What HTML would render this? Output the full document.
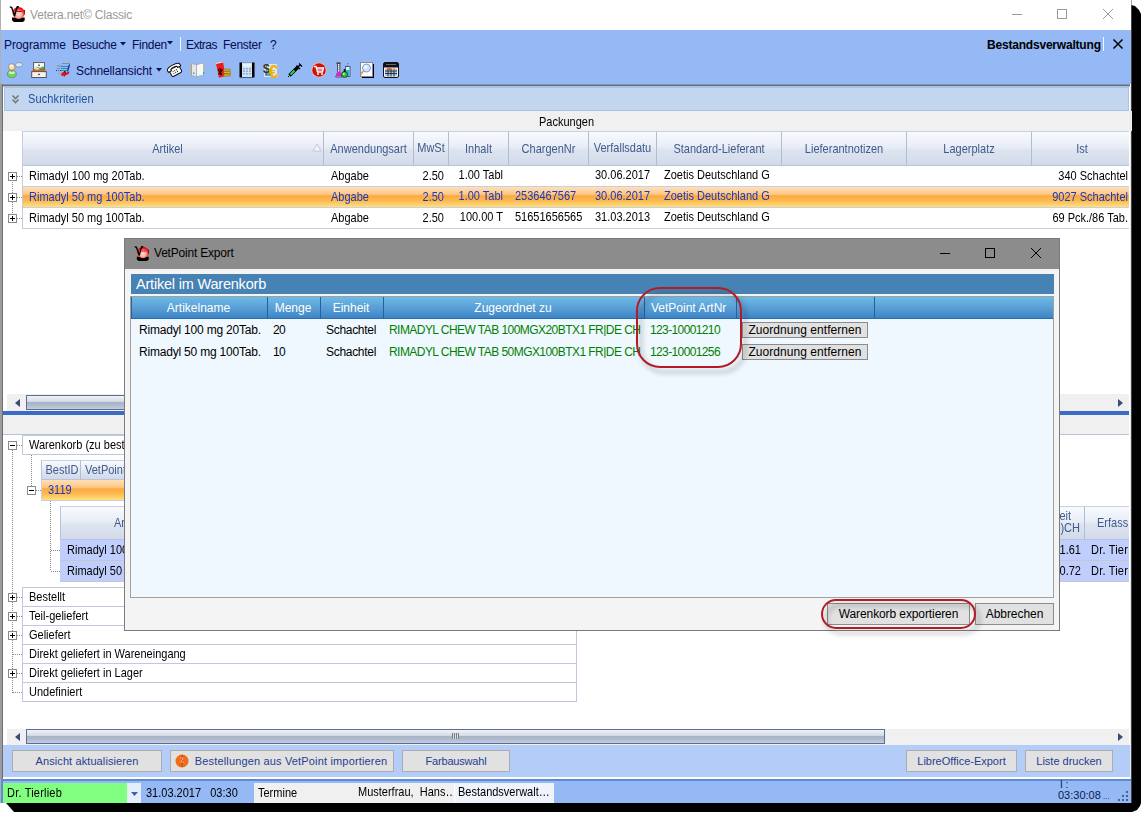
<!DOCTYPE html>
<html>
<head>
<meta charset="utf-8">
<title>Vetera.net Classic</title>
<style>
*{box-sizing:border-box;margin:0;padding:0}
html,body{width:1147px;height:818px;overflow:hidden;background:#fff}
body{font-family:"Liberation Sans",sans-serif;font-size:11px;color:#000;position:relative}
.a{position:absolute}
.t{position:absolute;white-space:nowrap;line-height:1}
/* main window */
#shadow{left:6px;top:5px;width:1135px;height:807px;background:#000;border-radius:0 10px 10px 0}
#win{left:0;top:0;width:1131px;height:803px;background:#fff;border-left:1px solid #b0b0b0}
#menubar{left:1px;top:30px;width:1130px;height:54px;background:#94b9f5}
.menu{font-size:12px;color:#0a0a50;letter-spacing:-.3px}
.hdr{position:absolute;top:131px;height:35px;background:linear-gradient(#f8fafd 0,#e8edf6 45%,#dde4f0 56%,#d2daea 100%);border-right:1px solid #b2bcd2;border-top:1px solid #c9d2e4;border-bottom:1px solid #b9c4da;color:#3f5a8c;text-align:center;line-height:35px;font-size:11px;white-space:nowrap;overflow:hidden}
.row{position:absolute;left:22px;width:1107px;height:21px;border-bottom:1px solid #c9cfe0;background:#fff}
.sel{background:linear-gradient(#fee0b6 0,#fdc88a 36%,#fbaa3e 44%,#fcb950 68%,#fee07e 100%);color:#1838c8}
.btn{position:absolute;background:#e1e1e1;border:1px solid #adadad;text-align:center;white-space:nowrap;overflow:hidden}
.dv{width:1px;background:repeating-linear-gradient(#888 0 1px,transparent 1px 2px)}
.dh{height:1px;background:repeating-linear-gradient(90deg,#888 0 1px,transparent 1px 2px)}
.cell{background:#fff;border:1px solid #c0c8dc}
.prow{height:21px;background:#bfcefc;border-bottom:1px solid #c8c4d0}
.thumb{border:1px solid #5b6c98;background:linear-gradient(#f0f2f6 0,#d6dce6 42%,#a6b2c6 48%,#b2bdce 75%,#c4cedc 100%)}
.bb{font-size:11px;color:#243f90;line-height:20px}
.d{font-size:12px;color:#000;letter-spacing:-.2px}
.g{color:#008000;letter-spacing:-.55px}
.dh2{padding-right:3px;height:22px;border-left:1px solid #2a5f9e;color:#fff;font-size:12px;text-align:center;line-height:23px;white-space:nowrap}
.ann{border:2px solid #b31b25;filter:drop-shadow(4px 5px 2.500px rgba(0,0,0,.33))}
.row .t,.cell .t,.prow .t,.sel .t,.hdr .t,.sb .t,.t.sb,.t.ms{transform:scaleY(1.12);transform-origin:0 10px}
.hs{display:inline-block;transform:scaleY(1.12);transform-origin:50% 60%}
</style>
</head>
<body>
<svg class="a" style="left:0;top:0" width="1147" height="818"><path d="M1131 5l4 1 4 4 2 4V803l-1 3-3 4-5 2H14L6 803z" fill="#000"/><path d="M1131.500 0v5" stroke="#aaa"/><path d="M1131.500 5v798" stroke="#444"/></svg>
<div class="a" id="win"></div>
<!-- title bar -->
<div class="t" style="left:30px;top:9px;font-size:12px;color:#9a9a9a;letter-spacing:-.18px">Vetera.net© Classic</div>
<svg class="a" style="left:1011px;top:8px" width="110" height="14" viewBox="0 0 110 14"><g stroke="#9a9a9a" stroke-width="1" fill="none"><path d="M1 6.5h10"/><rect x="46.500" y="1.500" width="9" height="9"/><path d="M92 1l10 10M102 1l-10 10"/></g></svg>
<!-- menu/toolbar -->
<div class="a" id="menubar"></div>
<div class="t menu" style="left:4px;top:39px;letter-spacing:-.1px">Programme</div>
<div class="t menu" style="left:72px;top:39px">Besuche</div>
<div class="t menu" style="left:132px;top:39px">Finden</div>
<div class="t menu" style="left:186px;top:39px;letter-spacing:-.5px">Extras</div>
<div class="t menu" style="left:223px;top:39px">Fenster</div>
<div class="t menu" style="left:270px;top:39px">?</div>
<div class="a" style="left:180px;top:37px;width:1px;height:14px;background:#f2f6fe"></div>
<div class="t menu" style="left:987px;top:39px;font-weight:bold;color:#000;letter-spacing:-.2px">Bestandsverwaltung</div>
<div class="a" style="left:1103px;top:37px;width:1px;height:14px;background:#f2f6fe"></div>
<svg class="a" style="left:1112px;top:38px" width="12" height="12" viewBox="0 0 12 12"><path d="M1.500 1.500l9 9M10.500 1.500l-9 9" stroke="#000" stroke-width="1.500"/></svg>
<div class="t menu" style="left:76px;top:65px;letter-spacing:-.1px">Schnellansicht</div>
<!-- toolbar icons -->
<svg class="a" style="left:7px;top:62px" width="16" height="16" viewBox="0 0 16 16"><ellipse cx="12" cy="2.8" rx="3.6" ry="2.3" fill="#cfe6fb" stroke="#7d8aa0" stroke-width=".8"/><ellipse cx="4.8" cy="12" rx="4.6" ry="3.8" fill="#6fd35a" stroke="#5a8a55" stroke-width=".7"/><ellipse cx="4.8" cy="10.6" rx="3" ry="1.6" fill="#d4f3c8"/><path d="M3.8 8.6l1 2 1-2z" fill="#e0402a"/><circle cx="4.8" cy="5" r="3.3" fill="#f6deb0" stroke="#8a7a66" stroke-width=".7"/><circle cx="4.2" cy="4" r="1.6" fill="#fdf3dc"/></svg>
<svg class="a" style="left:31px;top:62px" width="16" height="16" viewBox="0 0 16 16"><rect x="2.5" y=".5" width="11" height="7" fill="#e9e9e9" stroke="#666"/><rect x="3.5" y="1.5" width="9" height="3" fill="#fafafa"/><rect x="7" y="2.6" width="2" height="1.2" fill="#555"/><path d="M4 6.5l3-1.5 2 1 3-1.5 1 .8v2H4z" fill="#3cb828"/><path d="M4 6.8l2.500-1 2 1.200V8H4z" fill="#f4f4f4"/><rect x="1.500" y="7.500" width="13" height="2.200" fill="#f05a10"/><rect x=".7" y="9.600" width="14.600" height="5.900" fill="#f2f2f2" stroke="#555"/><rect x="7" y="11.800" width="2" height="1.300" fill="#555"/></svg>
<svg class="a" style="left:55px;top:62px" width="16" height="16" viewBox="0 0 16 16"><path d="M7 1.500h8" stroke="#8a8a8a"/><path d="M2 4h5M2 6.500h3" stroke="#8a8a8a" fill="none"/><path d="M6 4.500h8M6 6.500h7M5 8.500h7" stroke="#2a8fa8"/><path d="M14.500 2.500l-2 7" stroke="#1a2fb0" stroke-width="1.300"/><path d="M1 8.500h6" stroke="#1a2fb0" stroke-dasharray="1 1"/><path d="M4 8v4h3" stroke="#9aa" fill="none"/><path d="M6.500 11l3-1.500 1.500 1.200 3.500-1.200-.800 2.500-3 1.200-1.500 1.800-1-1.500-2 .5z" fill="#e0101a"/><path d="M9 9.500l2 .7" stroke="#111" stroke-width="1.200"/></svg>
<svg class="a" style="left:156px;top:68px" width="6" height="4"><path d="M0 0h6L3 3.500z" fill="#10104a"/></svg>
<svg class="a" style="left:120px;top:42px" width="6" height="4"><path d="M0 0h6L3 3.500z" fill="#10104a"/></svg>
<svg class="a" style="left:167px;top:41px" width="6" height="4"><path d="M0 0h6L3 3.500z" fill="#10104a"/></svg>
<svg class="a" style="left:167px;top:62px" width="16" height="16" viewBox="0 0 16 16"><g transform="rotate(-28 8 8)"><rect x="2.500" y="5.500" width="11" height="7.500" rx="1.500" fill="#fff" stroke="#111"/><path d="M1 5.500c0-4 14-4 14 0v1.500h-3.500V5.500c-1.500-1-5.500-1-7 0V7H1z" fill="#fff" stroke="#111"/><path d="M5.500 8v4M7.500 8v4M9.500 8v4" stroke="#111" stroke-width=".9" stroke-dasharray="1 1"/></g></svg>
<svg class="a" style="left:190px;top:62px" width="16" height="16" viewBox="0 0 16 16"><path d="M1.500 1.500l5 1.200v12l-5-1.200z" fill="#e4e6e8" stroke="#9a9a90" stroke-width=".6"/><path d="M6.500 2.700l7-1.700v12l-7 1.700z" fill="#f7f7f7" stroke="#9a9a90" stroke-width=".6"/><path d="M1.500 1.500v12" stroke="#c8a050" stroke-width="1"/><path d="M13.800 1v12" stroke="#b0b8c0" stroke-width="1"/><rect x="13" y="5" width="1.500" height="2" fill="#e8b830"/><rect x="13" y="10" width="1.500" height="2" fill="#38a8b8"/><rect x="3" y="10.500" width="1.500" height="1.500" fill="#38a8b8"/></svg>
<svg class="a" style="left:215px;top:62px" width="16" height="16" viewBox="0 0 16 16"><path d="M1 1.500l7-1.500 2.500 14-6.500 1.800z" fill="#f01818"/><path d="M1 1.500l7-1.500" stroke="#fff" stroke-width=".8"/><circle cx="4.800" cy="8" r="1.300" fill="none" stroke="#000" stroke-width="1"/><path d="M3.500 12.500l4-5" stroke="#000" stroke-width="1.100"/><circle cx="6" cy="12" r="1" fill="#000"/><g fill="#e8b820" stroke="#7a5a10" stroke-width=".6"><rect x="8.500" y="7.200" width="7" height="2" rx="1"/><rect x="8.500" y="9.600" width="7" height="2" rx="1"/><rect x="8.500" y="12" width="7" height="2" rx="1"/></g></svg>
<svg class="a" style="left:239px;top:62px" width="16" height="16" viewBox="0 0 16 16"><rect x=".5" y=".5" width="15" height="15" fill="#000"/><rect x="3" y=".5" width="10" height="14.500" fill="#cfe2f8"/><rect x="4" y="2" width="8" height="2.500" fill="#e8f2fc"/><g fill="#8ab0e0"><rect x="4" y="6" width="2" height="1.500"/><rect x="7" y="6" width="2" height="1.500"/><rect x="4" y="8.500" width="2" height="1.500"/><rect x="7" y="8.500" width="2" height="1.500"/><rect x="4" y="11" width="2" height="1.500"/><rect x="7" y="11" width="2" height="1.500"/><rect x="10" y="8.500" width="2" height="1.500"/><rect x="10" y="11" width="2" height="1.500"/></g><rect x="10" y="5.800" width="2" height="1.800" fill="#f09040"/></svg>
<svg class="a" style="left:263px;top:62px" width="16" height="16" viewBox="0 0 16 16"><rect x="1" y="2" width="13" height="13" fill="#dfe7ee"/><rect x="2" y="10" width="8" height="4" fill="#58a0d8"/><text x="0" y="11" font-family="Liberation Sans" font-weight="bold" font-size="12" fill="#333">$</text><text x="5.500" y="15.500" font-family="Liberation Sans" font-weight="bold" font-size="18" fill="#f0b400">€</text></svg>
<svg class="a" style="left:287px;top:62px" width="16" height="16" viewBox="0 0 16 16"><path d="M2.500 13.500L11 5" stroke="#000" stroke-width="3.400" stroke-linecap="butt"/><path d="M3.500 12.500L7.500 8.500" stroke="#20e050" stroke-width="2"/><path d="M9.500 3.500l3.500 3.500M11 5l2.500-2.500M12 1.500l3 3" stroke="#000" stroke-width="1.300" fill="none"/><path d="M1 15l1.500-1.500" stroke="#000" stroke-width="1"/></svg>
<svg class="a" style="left:311px;top:62px" width="16" height="16" viewBox="0 0 16 16"><circle cx="8" cy="8" r="7.600" fill="#f0c8a0"/><circle cx="8" cy="8" r="6.800" fill="#d01010"/><path d="M3 4.500h2l1.500 5.500h5l1-4H6" stroke="#fff" stroke-width="1.300" fill="none"/><path d="M6.500 8h5.500" stroke="#fff" stroke-width="1"/><circle cx="7" cy="12" r="1" fill="#fff"/><circle cx="11" cy="12" r="1" fill="#fff"/></svg>
<svg class="a" style="left:335px;top:62px" width="16" height="16" viewBox="0 0 16 16"><rect x="1.500" y=".5" width="4" height="1.300" fill="#222"/><path d="M2.500 1.500v9l-1.800 4.500h6l-1.800-4.500v-9z" fill="#f4f4f8" stroke="#333" stroke-width=".8"/><path d="M2.600 9.500h2.800l1.300 5H1.300z" fill="#e020d8"/><path d="M3.500 3.500h1M3.500 5.500h1M3.500 7.500h1" stroke="#333" stroke-width=".7"/><rect x="10.500" y="4.500" width="4.500" height="10" fill="#d8f0f8" stroke="#445" stroke-width=".8"/><rect x="11" y="8" width="3.500" height="6" fill="#28b8d8"/><path d="M13.500 1l-2 4" stroke="#3050c0" stroke-width=".9" stroke-dasharray="1 1"/><circle cx="9.500" cy="12.500" r="3" fill="#30c830" stroke="#0a3a0a" stroke-width=".8"/><rect x="8.700" y="7" width="1.600" height="3" fill="#111"/><circle cx="8.800" cy="12" r=".9" fill="#c8f8c8"/></svg>
<svg class="a" style="left:359px;top:62px" width="16" height="16" viewBox="0 0 16 16"><rect x="3" y="2" width="12" height="14" fill="#000"/><rect x="1.500" y=".5" width="12" height="14" fill="#fbfbfd" stroke="#889"/><circle cx="7.500" cy="6" r="4" fill="#cfe4fa" stroke="#7aa0d0" stroke-width="1"/><circle cx="6.500" cy="5" r="1.800" fill="#f0f8ff"/><path d="M4.500 9l-3 3.500" stroke="#c89858" stroke-width="1.600"/></svg>
<svg class="a" style="left:383px;top:62px" width="16" height="16" viewBox="0 0 16 16"><rect x=".5" y=".5" width="15" height="15" rx="1.500" fill="#fff" stroke="#111"/><rect x="1" y="1" width="14" height="4.500" fill="#111"/><rect x="3" y="2" width="10" height="1" fill="#666"/><rect x="2" y="6.500" width="12" height="8" fill="#a8c8e8"/><path d="M2 9h12M2 11.500h12M5 6.500v8M8 6.500v8M11 6.500v8" stroke="#223" stroke-width=".9"/><rect x="4" y="6.200" width="4" height="2" fill="#f05020"/><rect x="10" y="6.500" width="2" height="1.800" fill="#f0a020"/></svg>
<svg class="a" style="left:9px;top:6px" width="16" height="16" viewBox="0 0 16 16"><defs><radialGradient id="ag9" cx=".5" cy=".62" r=".55"><stop offset="0" stop-color="#ffdccc"/><stop offset=".5" stop-color="#ffa498"/><stop offset=".82" stop-color="#ff2424"/><stop offset="1" stop-color="#e80010"/></radialGradient></defs><path d="M3 11.500h12.700v3l-2.200 1.800H5.200L3 14.300z" fill="#000"/><rect x="14.300" y="4" width="1.500" height="4.500" fill="#000"/><circle cx="9.600" cy="7" r="6.100" fill="url(#ag9)"/><path d="M.8 .8l1.800 .5 3 8.500 2.600-9h1.600" stroke="#000" stroke-width="1.400" fill="none" stroke-linejoin="round"/><path d="M8 5.500h5" stroke="#b01020" stroke-width="1"/><path d="M8.300 6v2.500M10.300 6v2.500M12.300 6v2.500" stroke="#d8e0e8" stroke-width=".8"/></svg>
<!-- content frame -->
<div class="a" style="left:0;top:84px;width:1130px;height:3px;background:#6f6f6f;border-top:1px solid #7d93b8;border-bottom:1px solid #a9bfde"></div>
<div class="a" style="left:0;top:84px;width:3px;height:695px;background:#6e6e6e;border-left:2px solid #9c9c9c"></div>
<div class="a" id="such" style="left:4px;top:87px;width:1125px;height:24px;background:#c2d6f0;border:1px solid #a9c3e8"></div>
<svg class="a" style="left:11px;top:94px" width="9" height="11" viewBox="0 0 9 11"><path d="M1.500 1.500l3 3 3-3M1.500 5.500l3 3 3-3" stroke="#777" stroke-width="1.600" fill="none"/></svg>
<div class="t ms" style="left:28px;top:94px;font-size:11px;color:#1f4ea0;letter-spacing:.12px">Suchkriterien</div>
<div class="a" style="left:3px;top:111px;width:1129px;height:20px;background:#f0f0f0"></div>
<div class="t ms" style="left:539px;top:117px">Packungen</div>
<!-- upper grid -->
<div class="a" style="left:3px;top:131px;width:1127px;height:264px;background:#fff"></div>
<div class="a" style="left:22px;top:131px;width:1px;height:98px;background:#c3cbdd;z-index:2"></div>
<div class="hdr" style="left:23px;width:301px;padding-right:11px"><span class="hs">Artikel</span></div>
<svg class="a" style="left:312px;top:143px;z-index:3" width="10" height="9" viewBox="0 0 10 9"><path d="M5 1L9 8H1z" fill="#f4f6fa" stroke="#c2c8d6" stroke-width="1"/></svg>
<div class="hdr" style="left:324px;width:90px"><span class="hs">Anwendungsart</span></div>
<div class="hdr" style="left:414px;width:35px;line-height:32px"><span class="hs">MwSt</span></div>
<div class="hdr" style="left:449px;width:60px"><span class="hs">Inhalt</span></div>
<div class="hdr" style="left:509px;width:80px"><span class="hs">ChargenNr</span></div>
<div class="hdr" style="left:589px;width:68px;line-height:33px"><span class="hs">Verfallsdatu</span></div>
<div class="hdr" style="left:657px;width:125px"><span class="hs">Standard-Lieferant</span></div>
<div class="hdr" style="left:782px;width:125px"><span class="hs">Lieferantnotizen</span></div>
<div class="hdr" style="left:907px;width:125px"><span class="hs">Lagerplatz</span></div>
<div class="hdr" style="left:1032px;width:97px;border-right:0;padding-left:3px"><span class="hs">Ist</span></div>
<div class="row" style="top:166px"><span class="t" style="left:7px;top:5px">Rimadyl 100 mg 20Tab.</span><span class="t" style="left:309px;top:5px">Abgabe</span><span class="t" style="right:685px;top:5px">2.50</span><span class="t" style="right:626px;top:4px">1.00 Tabl</span><span class="t" style="left:493px;top:4px;width:72px;overflow:hidden"></span><span class="t" style="left:573px;top:4px">30.06.2017</span><span class="t" style="left:642px;top:4px">Zoetis Deutschland G</span><span class="t" style="right:1px;top:5px">340 Schachtel</span></div>
<div class="row sel" style="top:187px"><span class="t" style="left:7px;top:5px">Rimadyl 50 mg 100Tab.</span><span class="t" style="left:309px;top:5px">Abgabe</span><span class="t" style="right:685px;top:5px">2.50</span><span class="t" style="right:626px;top:4px">1.00 Tabl</span><span class="t" style="left:493px;top:4px;width:72px;overflow:hidden">2536467567</span><span class="t" style="left:573px;top:4px">30.06.2017</span><span class="t" style="left:642px;top:4px">Zoetis Deutschland G</span><span class="t" style="right:1px;top:5px">9027 Schachtel</span></div>
<div class="row" style="top:208px"><span class="t" style="left:7px;top:5px">Rimadyl 50 mg 100Tab.</span><span class="t" style="left:309px;top:5px">Abgabe</span><span class="t" style="right:685px;top:5px">2.50</span><span class="t" style="right:626px;top:4px">100.00 T</span><span class="t" style="left:493px;top:4px;width:72px;overflow:hidden">51651656565</span><span class="t" style="left:573px;top:4px">31.03.2013</span><span class="t" style="left:642px;top:4px">Zoetis Deutschland G</span><span class="t" style="right:1px;top:5px">69 Pck./86 Tab.</span></div>
<div class="a dv" style="left:12px;top:176px;height:42px"></div>
<div class="a dh" style="left:17px;top:176px;width:5px"></div>
<svg class="a" style="left:8px;top:172px" width="9" height="9" viewBox="0 0 9 9"><rect x=".5" y=".5" width="8" height="8" fill="#fff" stroke="#8a8a8a"/><path d="M2 4.5h5M4.5 2v5" stroke="#000" fill="none"/></svg>
<div class="a dh" style="left:17px;top:197px;width:5px"></div>
<svg class="a" style="left:8px;top:193px" width="9" height="9" viewBox="0 0 9 9"><rect x=".5" y=".5" width="8" height="8" fill="#fff" stroke="#8a8a8a"/><path d="M2 4.5h5M4.5 2v5" stroke="#000" fill="none"/></svg>
<div class="a dh" style="left:17px;top:218px;width:5px"></div>
<svg class="a" style="left:8px;top:214px" width="9" height="9" viewBox="0 0 9 9"><rect x=".5" y=".5" width="8" height="8" fill="#fff" stroke="#8a8a8a"/><path d="M2 4.5h5M4.5 2v5" stroke="#000" fill="none"/></svg>
<!-- upper scrollbar + splitter -->
<div class="a" style="left:3px;top:394px;width:1126px;height:17px;background:#f0f0f0"></div>
<div class="a" style="left:3px;top:394px;width:4px;height:17px;background:#fff"></div>
<div class="a thumb" style="left:26px;top:395px;width:500px;height:15px"></div>
<svg class="a" style="left:15px;top:399px" width="5" height="8"><path d="M5 0v8L0 4z" fill="#3c4a78"/></svg>
<svg class="a" style="left:1118px;top:399px" width="5" height="8"><path d="M0 0v8l5-4z" fill="#3c4a78"/></svg>
<div class="a" style="left:3px;top:411px;width:1126px;height:4px;background:#3a6bc5"></div>
<div class="a" style="left:3px;top:415px;width:1126px;height:20px;background:#f0f0f0;border-bottom:1px solid #b8c3da"></div>
<!-- lower grid -->
<div class="a" style="left:3px;top:435px;width:1127px;height:294px;background:#fff"></div>
<div class="a cell" style="left:22px;top:435px;width:555px;height:20px"><span class="t" style="left:6px;top:4px">Warenkorb (zu bestellen)</span></div>
<svg class="a" style="left:8px;top:441px" width="9" height="9" viewBox="0 0 9 9"><rect x=".5" y=".5" width="8" height="8" fill="#fff" stroke="#8a8a8a"/><path d="M2 4.5h5" stroke="#000" fill="none"/></svg>
<div class="a dh" style="left:17px;top:445px;width:5px"></div>
<div class="a dv" style="left:12px;top:450px;height:243px"></div>
<div class="hdr" style="left:41px;top:460px;width:40px;height:20px;line-height:18px;border-left:1px solid #b9c4da;padding-left:2px"><span class="hs">BestID</span></div>
<div class="hdr" style="left:81px;top:460px;width:60px;height:20px;line-height:18px;text-align:left;padding-left:4px"><span class="hs">VetPoint</span></div>
<div class="a sel" style="left:41px;top:480px;width:200px;height:21px;border-bottom:1px solid #c9cfe0;border-left:1px solid #c9cfe0"><span class="t" style="left:6px;top:5px">3119</span></div>
<div class="a dv" style="left:31px;top:455px;height:31px"></div>
<svg class="a" style="left:27px;top:486px" width="9" height="9" viewBox="0 0 9 9"><rect x=".5" y=".5" width="8" height="8" fill="#fff" stroke="#8a8a8a"/><path d="M2 4.5h5" stroke="#000" fill="none"/></svg>
<div class="a dh" style="left:36px;top:490px;width:5px"></div>
<div class="hdr" style="left:60px;top:506px;width:200px;height:34px;line-height:32px;border-left:1px solid #b9c4da;text-align:left;padding-left:53px"><span class="hs">Artikel</span></div>
<div class="a prow" style="left:60px;top:540px;width:200px"><span class="t" style="left:7px;top:5px">Rimadyl 100 mg 20Tab.</span></div>
<div class="a prow" style="left:60px;top:561px;width:200px"><span class="t" style="left:7px;top:5px">Rimadyl 50 mg 100Tab.</span></div>
<div class="a dv" style="left:50px;top:501px;height:70px"></div>
<div class="a dh" style="left:51px;top:550px;width:9px"></div>
<div class="a dh" style="left:51px;top:571px;width:9px"></div>
<div class="hdr" style="left:1040px;top:506px;width:45px;height:34px"><span class="t" style="right:13px;top:4px">eit</span><span class="t" style="right:4px;top:16px">%)CH</span></div>
<div class="hdr" style="left:1085px;top:506px;width:45px;height:34px;line-height:32px;text-align:left;padding-left:12px;border-right:0;width:44px"><span class="hs">Erfass</span></div>
<div class="a prow" style="left:1040px;top:540px;width:89px"><span class="t" style="right:48px;top:5px">1.61</span><span class="t" style="left:51px;top:5px;letter-spacing:.2px">Dr. Tier</span></div>
<div class="a prow" style="left:1040px;top:561px;width:89px"><span class="t" style="right:48px;top:5px">0.72</span><span class="t" style="left:51px;top:5px;letter-spacing:.2px">Dr. Tier</span></div>
<div class="a cell" style="left:22px;top:587px;width:555px;height:20px"><span class="t" style="left:6px;top:4px">Bestellt</span></div>
<div class="a dh" style="left:17px;top:597px;width:5px"></div>
<svg class="a" style="left:8px;top:593px" width="9" height="9" viewBox="0 0 9 9"><rect x=".5" y=".5" width="8" height="8" fill="#fff" stroke="#8a8a8a"/><path d="M2 4.5h5M4.5 2v5" stroke="#000" fill="none"/></svg>
<div class="a cell" style="left:22px;top:606px;width:555px;height:20px"><span class="t" style="left:6px;top:4px">Teil-geliefert</span></div>
<div class="a dh" style="left:17px;top:616px;width:5px"></div>
<svg class="a" style="left:8px;top:612px" width="9" height="9" viewBox="0 0 9 9"><rect x=".5" y=".5" width="8" height="8" fill="#fff" stroke="#8a8a8a"/><path d="M2 4.5h5M4.5 2v5" stroke="#000" fill="none"/></svg>
<div class="a cell" style="left:22px;top:625px;width:555px;height:20px"><span class="t" style="left:6px;top:4px">Geliefert</span></div>
<div class="a dh" style="left:17px;top:635px;width:5px"></div>
<svg class="a" style="left:8px;top:631px" width="9" height="9" viewBox="0 0 9 9"><rect x=".5" y=".5" width="8" height="8" fill="#fff" stroke="#8a8a8a"/><path d="M2 4.5h5M4.5 2v5" stroke="#000" fill="none"/></svg>
<div class="a cell" style="left:22px;top:644px;width:555px;height:20px"><span class="t" style="left:6px;top:4px">Direkt geliefert in Wareneingang</span></div>
<div class="a dh" style="left:13px;top:654px;width:9px"></div>
<div class="a cell" style="left:22px;top:663px;width:555px;height:20px"><span class="t" style="left:6px;top:4px">Direkt geliefert in Lager</span></div>
<div class="a dh" style="left:17px;top:673px;width:5px"></div>
<svg class="a" style="left:8px;top:669px" width="9" height="9" viewBox="0 0 9 9"><rect x=".5" y=".5" width="8" height="8" fill="#fff" stroke="#8a8a8a"/><path d="M2 4.5h5M4.5 2v5" stroke="#000" fill="none"/></svg>
<div class="a cell" style="left:22px;top:682px;width:555px;height:20px"><span class="t" style="left:6px;top:4px">Undefiniert</span></div>
<div class="a dh" style="left:13px;top:692px;width:9px"></div>
<!-- lower scrollbar -->
<div class="a" style="left:3px;top:729px;width:1126px;height:16px;background:#f0f0f0"></div>
<div class="a" style="left:3px;top:729px;width:4px;height:16px;background:#fff"></div>
<div class="a thumb" style="left:26px;top:729px;width:859px;height:15px"></div>
<div class="a" style="left:452px;top:733px;width:7px;height:6px;background:repeating-linear-gradient(90deg,#7c7c80 0 1px,#d8dde6 1px 2px)"></div>
<svg class="a" style="left:15px;top:733px" width="5" height="8"><path d="M5 0v8L0 4z" fill="#3c4a78"/></svg>
<svg class="a" style="left:1118px;top:733px" width="5" height="8"><path d="M0 0v8l5-4z" fill="#3c4a78"/></svg>
<!-- button bar -->
<div class="a" style="left:3px;top:745px;width:1127px;height:32px;background:#b3cdf8"></div>
<div class="btn bb" style="left:12px;top:750px;width:150px;height:22px;letter-spacing:.1px">Ansicht aktualisieren</div>
<div class="btn bb" style="left:170px;top:750px;width:224px;height:22px;padding-left:18px;letter-spacing:.16px">Bestellungen aus VetPoint importieren</div>
<svg class="a" style="left:175px;top:754px" width="14" height="14" viewBox="0 0 14 14"><circle cx="7" cy="7" r="6.5" fill="#f26a1b"/><path d="M7 1.5v11" stroke="#7a3a10" stroke-width="1" stroke-dasharray="1.5 1"/><path d="M5.5 4c2-1 3 1 1.5 2s-1 3 1.5 2" stroke="#ffd0a8" fill="none" stroke-width=".9"/></svg>
<div class="btn bb" style="left:402px;top:750px;width:108px;height:22px;letter-spacing:-.18px">Farbauswahl</div>
<div class="btn bb" style="left:906px;top:750px;width:111px;height:22px;">LibreOffice-Export</div>
<div class="btn bb" style="left:1025px;top:750px;width:88px;height:22px;">Liste drucken</div>
<!-- status bar -->
<div class="a" style="left:1px;top:779px;width:1130px;height:24px;background:#94b9f5;border-top:2px solid #5d8ad8;border-left:2px solid #5d8ad8"></div>
<div class="a sb" style="left:3px;top:783px;width:124px;height:20px;background:#80ff80"><span class="t" style="left:4px;top:5px;letter-spacing:.2px">Dr. Tierlieb</span></div>
<div class="a" style="left:127px;top:783px;width:14px;height:20px;background:#e6eefb"><svg class="a" style="left:4px;top:9px" width="7" height="4"><path d="M0 0h7L3.5 4z" fill="#3a60b0"/></svg></div>
<div class="t sb" style="left:146px;top:788px">31.03.2017&nbsp;&nbsp; 03:30</div>
<div class="a sb" style="left:254px;top:783px;width:200px;height:20px;background:#f0f0f0"><span class="t" style="left:4px;top:5px">Termine</span><span class="t" style="left:104px;top:4px">Musterfrau,&nbsp; Hans…</span></div>
<div class="a sb" style="left:454px;top:783px;width:100px;height:20px;background:#eef3fc;border-left:1px solid #fff"><span class="t" style="left:3px;top:4px">Bestandsverwalt…</span></div>
<div class="t" style="left:1060px;top:780px;font-size:10px;color:#0c1c50">I :</div><div class="t" style="left:1058px;top:790px;color:#0c1c50">03:30:08<span style="font-size:8px"> ...</span></div>
<svg class="a" style="left:1118px;top:790px" width="12" height="11" viewBox="0 0 12 11"><g fill="#4a5f8a"><rect x="8" y="1" width="2" height="2"/><rect x="4" y="5" width="2" height="2"/><rect x="8" y="5" width="2" height="2"/><rect x="0" y="9" width="2" height="2"/><rect x="4" y="9" width="2" height="2"/><rect x="8" y="9" width="2" height="2"/></g></svg>
<div class="a" style="left:1130px;top:87px;width:1px;height:692px;background:#e6e6e6"></div>
<!-- dialog -->
<div class="a" id="dlg" style="left:124px;top:238px;width:936px;height:393px;background:#f4f4f4;border:1px solid #7b7b7b"></div>
<div class="a" style="left:125px;top:239px;width:934px;height:30px;background:#8c8c8c"></div>
<div class="t d" style="left:154px;top:247px">VetPoint Export</div>
<svg class="a" style="left:134px;top:246px" width="15" height="15" viewBox="0 0 16 16"><defs><radialGradient id="ag134" cx=".5" cy=".62" r=".55"><stop offset="0" stop-color="#ffdccc"/><stop offset=".5" stop-color="#ffa498"/><stop offset=".82" stop-color="#ff2424"/><stop offset="1" stop-color="#e80010"/></radialGradient></defs><path d="M3 11.500h12.700v3l-2.200 1.800H5.200L3 14.300z" fill="#000"/><rect x="14.300" y="4" width="1.500" height="4.500" fill="#000"/><circle cx="9.600" cy="7" r="6.100" fill="url(#ag134)"/><path d="M.8 .8l1.800 .5 3 8.500 2.600-9h1.600" stroke="#000" stroke-width="1.400" fill="none" stroke-linejoin="round"/><path d="M8 5.500h5" stroke="#b01020" stroke-width="1"/><path d="M8.300 6v2.500M10.300 6v2.500M12.300 6v2.500" stroke="#d8e0e8" stroke-width=".8"/></svg>
<svg class="a" style="left:938px;top:246px" width="106" height="14" viewBox="0 0 106 14"><g stroke="#000" stroke-width="1" fill="none"><path d="M2 7.5h10"/><rect x="47.5" y="2.5" width="9" height="9"/><path d="M93 2l10 10M103 2l-10 10"/></g></svg>
<div class="a" style="left:131px;top:274px;width:923px;height:20px;background:#4682b4"><span class="t" style="left:5px;top:3px;font-size:14.500px;color:#fff;letter-spacing:-.2px">Artikel im Warenkorb</span></div>
<div class="a" style="left:130px;top:296px;width:924px;height:302px;background:#f0f8ff;border:1px solid #a0a0a0"></div>
<div class="a" style="left:131px;top:297px;width:922px;height:22px;background:linear-gradient(#6cbbe8,#5a9fd6 50%,#3d85c6);border-bottom:1px solid #2a6cb4"></div>
<div class="a dh2" style="left:131px;top:297px;width:137px">Artikelname</div>
<div class="a dh2" style="left:267px;top:297px;width:54px">Menge</div>
<div class="a dh2" style="left:320px;top:297px;width:64px">Einheit</div>
<div class="a dh2" style="left:383px;top:297px;width:262px">Zugeordnet zu</div>
<div class="a dh2" style="left:644px;top:297px;width:93px;text-align:left;padding-left:6px">VetPoint ArtNr</div>
<div class="a dh2" style="left:736px;top:297px;width:139px"></div>
<div class="a dh2" style="left:874px;top:297px;width:180px"></div>
<div class="t d" style="left:139px;top:324px">Rimadyl 100 mg 20Tab.</div><div class="t d" style="left:273px;top:324px;letter-spacing:-.7px">20</div><div class="t d" style="left:326px;top:324px;letter-spacing:-.3px">Schachtel</div><div class="t d g" style="left:389px;top:324px;width:254px;overflow:hidden">RIMADYL CHEW TAB 100MGX20BTX1 FR|DE CH</div><div class="t d g" style="letter-spacing:-.62px;left:650px;top:324px">123-10001210</div><div class="btn d" style="left:742px;top:322px;width:126px;height:16px;line-height:14px;border-color:#8c8c8c;letter-spacing:.05px">Zuordnung entfernen</div>
<div class="t d" style="left:139px;top:346px">Rimadyl 50 mg 100Tab.</div><div class="t d" style="left:273px;top:346px;letter-spacing:-.7px">10</div><div class="t d" style="left:326px;top:346px;letter-spacing:-.3px">Schachtel</div><div class="t d g" style="left:389px;top:346px;width:254px;overflow:hidden">RIMADYL CHEW TAB 50MGX100BTX1 FR|DE CH</div><div class="t d g" style="letter-spacing:-.62px;left:650px;top:346px">123-10001256</div><div class="btn d" style="left:742px;top:344px;width:126px;height:16px;line-height:14px;border-color:#8c8c8c;letter-spacing:.05px">Zuordnung entfernen</div>
<div class="btn d" style="left:827px;top:603px;width:143px;height:22px;line-height:20px;border-color:#8c8c8c;letter-spacing:-.1px">Warenkorb exportieren</div>
<div class="btn d" style="left:975px;top:603px;width:79px;height:22px;line-height:20px;border-color:#8c8c8c;letter-spacing:-.05px">Abbrechen</div>
<!-- annotations -->
<div class="a ann" style="left:636px;top:287px;width:106px;height:81px;border-radius:24px"></div>
<div class="a ann" style="left:821px;top:599px;width:155px;height:30px;border-radius:15px"></div>
</body>
</html>
